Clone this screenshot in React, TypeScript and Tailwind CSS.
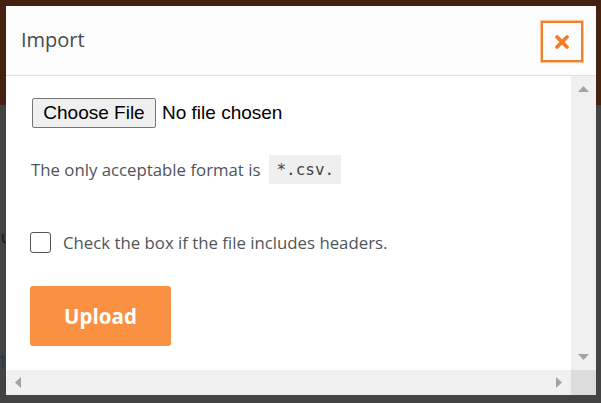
import React from "react";

const font = { fontFamily: '"Open Sans", "Noto Sans", sans-serif' };

const Arrow = (props: { dir: "up" | "down" | "left" | "right" }) => {
  const { dir } = props;
  const pts = {
    up: "0,6 5.5,0 11,6",
    down: "0,0 5.5,6 11,0",
    left: "6,0 0,5.5 6,11",
    right: "0,0 6,5.5 0,11",
  }[dir];
  const vertical = dir === "up" || dir === "down";
  return (
    <svg
      width={vertical ? 11 : 6}
      height={vertical ? 6 : 11}
      viewBox={vertical ? "0 0 11 6" : "0 0 6 11"}
    >
      <polygon points={pts} fill="#a3a3a3" />
    </svg>
  );
};

export default function App() {
  return (
    <div className="relative w-[601px] h-[403px] overflow-hidden flex flex-col" style={font}>
      {/* backdrop */}
      <div className="h-[105px] bg-[#45220f]" />
      <div className="flex-1 bg-[#434343] relative">
        <span className="absolute left-[1px] top-[124px] text-[#111] text-[16px] leading-none">u</span>
        <span className="absolute left-[-2px] top-[248px] text-[#1d3b5c] text-[16px] leading-none">1</span>
      </div>

      {/* modal */}
      <div className="absolute left-[6px] top-[6px] w-[590px] h-[389px] bg-white flex flex-col">
        <div className="h-[70px] bg-[#fcfcfc] border-b border-[#dee2e6] flex items-center justify-between pl-[15px] pr-[13px] shrink-0">
          <h5 className="text-[20px] text-[#454b51] font-normal leading-none pb-[1px]">Import</h5>
          <button className="w-[42px] h-[41px] border-2 border-[#f0802a] outline outline-1 outline-[#fbc7a0] flex items-center justify-center mt-[2px]">
            <svg width="16" height="16" viewBox="0 0 16 16">
              <path d="M3 3 L13 13 M13 3 L3 13" stroke="#f27d26" strokeWidth="3.8" strokeLinecap="round" />
            </svg>
          </button>
        </div>

        <div className="flex-1 flex flex-col min-h-0">
          <div className="flex-1 flex min-h-0">
            <div className="flex-1 pl-[24px] pt-[22px] text-[16.8px] text-[#505458]">
              <div className="flex items-center ml-[2px]">
                <button
                  className="h-[30px] w-[124px] bg-[#efefef] border border-[#767676] rounded-[2px] text-[19px] text-black"
                  style={{ fontFamily: '"Liberation Sans", Arial, sans-serif' }}
                >
                  Choose File
                </button>
                <span
                  className="ml-[6px] text-[19px] text-black"
                  style={{ fontFamily: '"Liberation Sans", Arial, sans-serif' }}
                >
                  No file chosen
                </span>
              </div>

              <div className="flex items-center mt-[27px] ml-[1px]">
                <span>The only acceptable format is</span>
                <code
                  className="ml-[9px] bg-[#efefef] px-[7px] h-[29px] flex items-center text-[16px] text-[#444]"
                  style={{ fontFamily: '"DejaVu Sans Mono", "Liberation Mono", monospace' }}
                >
                  *.csv.
                </code>
              </div>

              <label className="flex items-center mt-[46px]">
                <span className="w-[21px] h-[21px] border-[1.5px] border-[#50555a] rounded-[3px] bg-white" />
                <span className="ml-[12px]">Check the box if the file includes headers.</span>
              </label>

              <button className="mt-[31px] w-[141px] h-[60px] bg-[#fa9142] rounded-[3px] text-white text-[20.5px] font-bold">
                Upload
              </button>
            </div>

            {/* vertical scrollbar */}
            <div className="w-[25px] bg-[#f0f0f0] flex flex-col items-center justify-between pt-[10px] pb-[10px]">
              <Arrow dir="up" />
              <Arrow dir="down" />
            </div>
          </div>

          {/* horizontal scrollbar */}
          <div className="h-[25px] flex shrink-0">
            <div className="flex-1 bg-[#f0f0f0] flex items-center justify-between pl-[9px] pr-[9px]">
              <Arrow dir="left" />
              <Arrow dir="right" />
            </div>
            <div className="w-[25px] bg-[#dcdcdc]" />
          </div>
        </div>
      </div>
    </div>
  );
}
